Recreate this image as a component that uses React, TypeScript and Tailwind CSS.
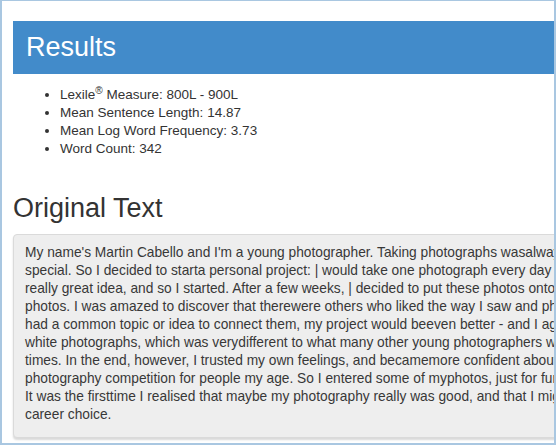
import React from 'react';

const stats = [
  { label: 'Mean Sentence Length', value: '14.87' },
  { label: 'Mean Log Word Frequency', value: '3.73' },
  { label: 'Word Count', value: '342' },
];

// the text box is wider than the window, so each line is kept as it wraps in the original
const lines = [
  "My name's Martin Cabello and I'm a young photographer. Taking photographs wasalways something",
  'special. So I decided to starta personal project: | would take one photograph every day for',
  'really great idea, and so I started. After a few weeks, | decided to put these photos onto',
  'photos. I was amazed to discover that therewere others who liked the way I saw and photographed',
  'had a common topic or idea to connect them, my project would beeven better - and I agreed',
  'white photographs, which was verydifferent to what many other young photographers were',
  'times. In the end, however, I trusted my own feelings, and becamemore confident about',
  'photography competition for people my age. So I entered some of myphotos, just for fun',
  'It was the firsttime I realised that maybe my photography really was good, and that I might',
  'career choice.',
];

export default function App() {
  return (
    <div className="w-[556px] h-[445px] overflow-hidden bg-white border-l-2 border-t border-r-2 border-b-2 border-[#a9c7e1] font-['Liberation_Sans',Arial,sans-serif] text-[#333333]">
      <div className="pl-[11px] pt-[20px]">
        {/* Results header */}
        <div className="h-[53px] bg-[#428bca] flex items-center pl-[13px]">
          <h1 className="text-[27px] leading-[31px] text-white">Results</h1>
        </div>

        <ul className="list-disc pl-[47px] mt-[12px] text-[13.5px] leading-[18px]">
          <li>
            Lexile<sup>®</sup> Measure: 800L - 900L
          </li>
          {stats.map((s) => (
            <li key={s.label}>
              {s.label}: {s.value}
            </li>
          ))}
        </ul>

        <h2 className="mt-[34px] text-[27px] leading-[32px]">Original Text</h2>

        <div className="mt-[10px] w-[640px] bg-[#eeeeee] border border-[#dadada] rounded-[4px] pl-[11px] pt-[9px] pb-[13px] shadow-[0_2px_2px_rgba(0,0,0,0.15)] text-[13.75px] leading-[18px] text-[#383838]">
          {lines.map((line, i) => (
            <div key={i} className="whitespace-nowrap">
              {line}
            </div>
          ))}
        </div>
      </div>
    </div>
  );
}
